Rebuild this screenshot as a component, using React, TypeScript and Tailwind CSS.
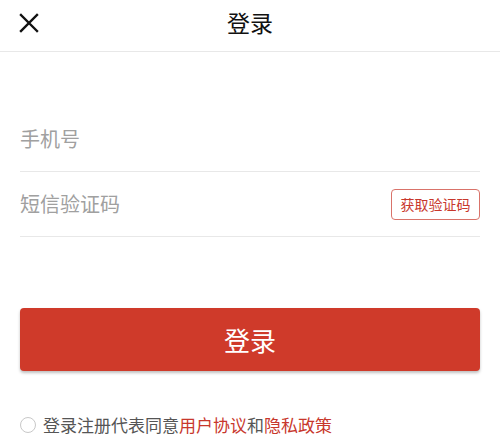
import { useState } from 'react';

export default function App() {
  const [agreed, setAgreed] = useState(false);

  return (
    <div
      className="w-[500px] h-[443px] bg-white overflow-hidden"
      style={{ fontFamily: '"Noto Sans CJK SC", "Noto Sans", sans-serif' }}
    >
      {/* Header */}
      <header className="relative h-[52px] flex items-center justify-center border-b border-[#e8e8e8]">
        <button className="absolute left-[18px] top-[12px] w-[22px] h-[22px] flex items-center justify-center">
          <svg width="20" height="20" viewBox="0 0 20 20" fill="none">
            <path d="M2 2 L18 18 M18 2 L2 18" stroke="#111" strokeWidth="2.4" strokeLinecap="square" />
          </svg>
        </button>
        <h1 className="text-[23px] leading-none text-[#111] -mt-[7px]">登录</h1>
      </header>

      {/* Form */}
      <div className="px-5 pt-[55px]">
        <div className="h-[65px] flex items-center border-b border-[#e8e8e8]">
          <input
            className="flex-1 text-[20px] text-[#333] placeholder:text-[#a0a0a0] outline-none bg-transparent"
            placeholder="手机号"
          />
        </div>
        <div className="h-[65px] flex items-center border-b border-[#e8e8e8]">
          <input
            className="flex-1 min-w-0 text-[20px] text-[#333] placeholder:text-[#a0a0a0] outline-none bg-transparent"
            placeholder="短信验证码"
          />
          <button className="w-[89px] h-[31px] border border-[#d9736a] rounded-[4px] text-[14px] text-[#c8372c] flex items-center justify-center">
            获取验证码
          </button>
        </div>

        <button className="mt-[71px] w-full h-[63px] rounded-[4px] bg-[#cf3a2a] text-white text-[26px] shadow-[0_2px_3px_rgba(0,0,0,0.25)] flex items-center justify-center">
          登录
        </button>

        <div className="mt-[46px] flex items-center gap-[7px]">
          <button
            onClick={() => setAgreed(!agreed)}
            className={`w-[16px] h-[16px] rounded-full border ${agreed ? 'border-[#cf3a2a] bg-[#cf3a2a]' : 'border-[#c8c8c8]'}`}
          />
          <p className="text-[17px] leading-none text-[#555] -mt-[2px]">
            登录注册代表同意<span className="text-[#c8372c]">用户协议</span>和
            <span className="text-[#c8372c]">隐私政策</span>
          </p>
        </div>
      </div>
    </div>
  );
}
